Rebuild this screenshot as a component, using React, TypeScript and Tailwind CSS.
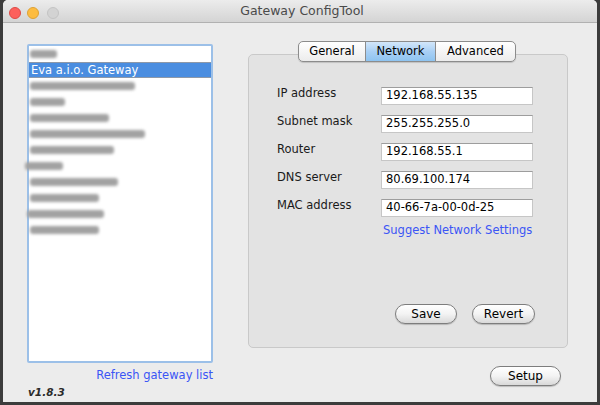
import React from "react";

const font = { fontFamily: '"DejaVu Sans", "Liberation Sans", sans-serif' };

const blurred = [
  { w: 27, l: 1 },
  null,
  { w: 105, l: 1 },
  { w: 35, l: 1 },
  { w: 79, l: 1 },
  { w: 115, l: 1 },
  { w: 84, l: 1 },
  { w: 38, l: -4 },
  { w: 88, l: 1 },
  { w: 69, l: 1 },
  { w: 77, l: -2 },
  { w: 69, l: 1 },
];

function ListRow({ item }: { item: { w: number; l: number } | null }) {
  if (item === null) {
    return (
      <div className="h-[16px] bg-[#4a8de0] border-y border-[#8d98a8] flex items-center pl-[2px] text-white text-[11.5px] leading-[14px]">
        Eva a.i.o. Gateway
      </div>
    );
  }
  return (
    <div className="h-[16px] flex items-center">
      <div
        className="h-[8px] rounded-[3px] bg-[#a2a2a2] blur-[1.5px]"
        style={{ width: item.w, marginLeft: item.l }}
      />
    </div>
  );
}

function AquaButton({ label, w }: { label: string; w: number }) {
  return (
    <div
      className="h-[20px] rounded-full border border-[#7d7d7d] bg-gradient-to-b from-[#ffffff] via-[#f3f3f3] to-[#d9d9d9] shadow-[0_1px_1px_rgba(0,0,0,0.2)] flex items-center justify-center text-[12px] text-black"
      style={{ width: w }}
    >
      {label}
    </div>
  );
}

function Field({ label, value }: { label: string; value: string }) {
  return (
    <div className="flex items-center h-[18px]">
      <div className="w-[104px] mb-[6px] text-[11.5px] leading-[14px] text-[#1a1a1a]">{label}</div>
      <div className="w-[152px] h-[18px] bg-white border border-[#c6c6c6] border-t-[#9d9d9d] flex items-center pl-[4px] text-[11.5px] text-black">
        {value}
      </div>
    </div>
  );
}

export default function App() {
  return (
    <div className="w-[600px] h-[405px] bg-[#3c3c3c] px-[3px] pb-[3px] overflow-hidden" style={font}>
      <div className="w-[594px] h-[402px] rounded-t-[5px] bg-[#ececec] flex flex-col overflow-hidden">
        {/* Title bar */}
        <div className="h-[23px] shrink-0 bg-gradient-to-b from-[#ececec] to-[#d4d4d4] border-b border-[#b1b1b1] flex items-center relative">
          <div className="flex items-center pl-[6px] gap-[6px] pt-[3px]">
            <div className="w-[12px] h-[12px] rounded-full bg-[#fc605c] border border-[#de4a45]" />
            <div className="w-[12px] h-[12px] rounded-full bg-[#fdbc40] border border-[#dea235]" />
            <div className="w-[12px] h-[12px] rounded-full bg-[#d3d3d3] border border-[#c4c4c4] ml-[2px]" />
          </div>
          <div className="flex-1 text-center text-[12.5px] text-[#4a4a4a] pt-[1px] pr-[52px]">Gateway ConfigTool</div>
        </div>

        {/* Content */}
        <div className="flex flex-1">
          {/* Left column */}
          <div className="ml-[24px] mt-[21px] w-[186px] flex flex-col">
            <div className="h-[319px] bg-white border-2 border-[#9cc0e8] rounded-[2px] flex flex-col">
              {blurred.map((it, i) => (
                <ListRow key={i} item={it} />
              ))}
            </div>
            <div className="mt-[5px] text-right text-[11.5px] leading-[14px] text-[#3b55f5]">Refresh gateway list</div>
            <div className="mt-[3px] ml-[1px] text-[10.5px] leading-[14px] italic font-bold text-[#2a2a2a]">v1.8.3</div>
          </div>

          {/* Right column */}
          <div className="ml-[35px] mt-[18px] w-[320px] flex flex-col">
            <div className="relative z-10 self-center ml-[-2px] flex h-[21px] rounded-[5px] border border-[#8c8c8c] bg-gradient-to-b from-[#ffffff] to-[#ececec] shadow-[0_1px_1px_rgba(0,0,0,0.15)] text-[11.5px] text-black overflow-hidden">
              <div className="w-[66px] flex items-center justify-center">General</div>
              <div className="w-[71px] flex items-center justify-center border-x border-[#8c8c8c] bg-gradient-to-b from-[#d3e7fa] via-[#a9d0f5] to-[#8ec4f0] border-t-[#3a5fa0]">Network</div>
              <div className="w-[79px] flex items-center justify-center">Advanced</div>
            </div>
            <div className="-mt-[8px] h-[294px] rounded-[5px] border border-[#c9c9c9] bg-[#e3e3e3] flex flex-col pl-[28px] pt-[32px]">
              <div className="flex flex-col gap-[10px]">
                <Field label="IP address" value="192.168.55.135" />
                <Field label="Subnet mask" value="255.255.255.0" />
                <Field label="Router" value="192.168.55.1" />
                <Field label="DNS server" value="80.69.100.174" />
                <Field label="MAC address" value="40-66-7a-00-0d-25" />
              </div>
              <div className="mt-[6px] ml-[106px] text-[11.5px] leading-[14px] text-[#3b55f5]">Suggest Network Settings</div>
              <div className="mt-[67px] flex justify-end gap-[15px] pr-[32px]">
                <AquaButton label="Save" w={62} />
                <AquaButton label="Revert" w={63} />
              </div>
            </div>
            <div className="mt-[18px] flex justify-end pr-[7px]">
              <AquaButton label="Setup" w={71} />
            </div>
          </div>
        </div>
      </div>
    </div>
  );
}
